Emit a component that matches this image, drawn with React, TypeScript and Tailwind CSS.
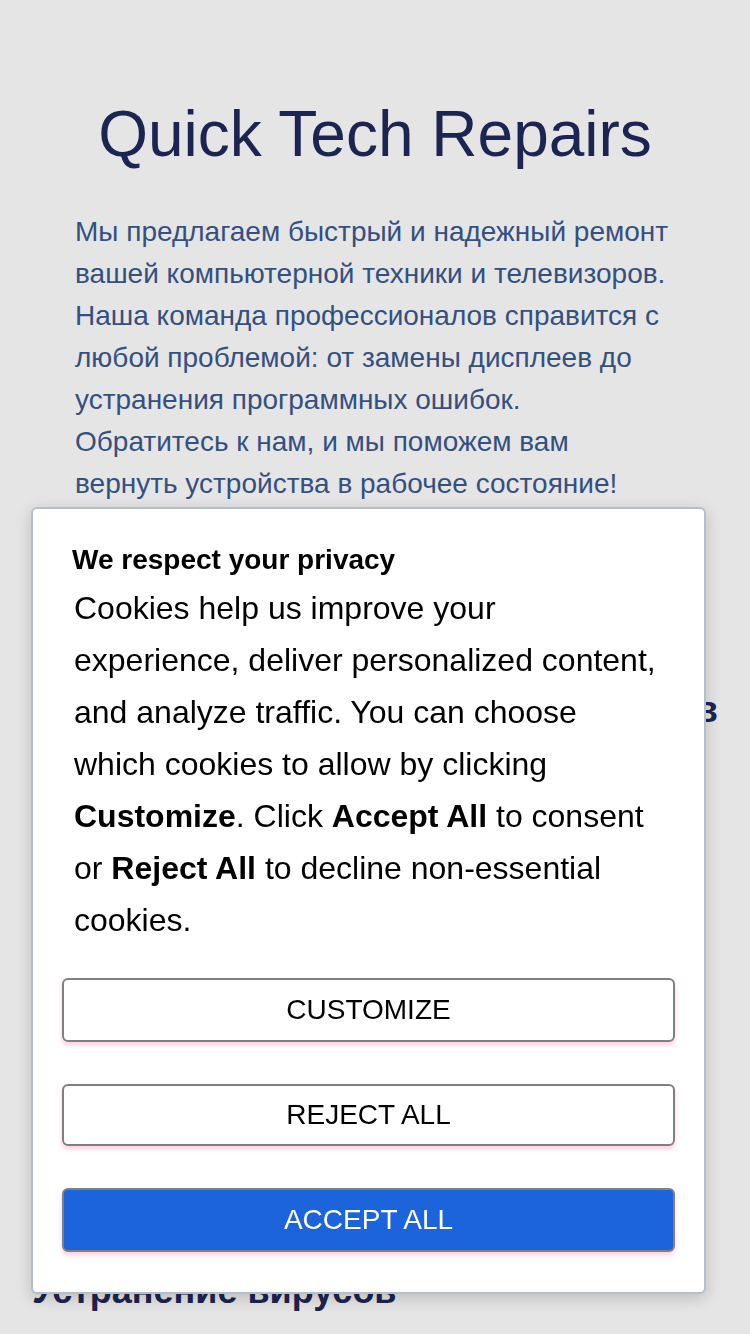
const App = () => {
  return (
    <div className="min-h-[1334px] bg-[#e5e5e5] font-['Liberation_Sans',Arial,sans-serif]">
      {/* Hero */}
      <section className="px-[75px] pt-[96px]">
        <h1 className="text-center text-[64px] leading-[1.2] text-[#1c2451]">Quick Tech Repairs</h1>
        <p className="mt-[38px] text-[28px] leading-[42px] text-[#34507f]">
          Мы предлагаем быстрый и надежный ремонт вашей компьютерной техники и телевизоров. Наша команда
          профессионалов справится с любой проблемой: от замены дисплеев до устранения программных ошибок.
          Обратитесь к нам, и мы поможем вам вернуть устройства в рабочее состояние!
        </p>
      </section>

      {/* Services */}
      <section className="px-[32px] pt-[185px]">
        <h2 className="text-right text-[36px] font-bold leading-[40px] text-[#1c2451] whitespace-nowrap">
          Ремонт ноутбуков
        </h2>
        <p className="mt-4 h-[126px] text-[28px] leading-[42px] text-[#34507f]">
          Диагностика и ремонт любой сложности: замена экранов, клавиатур и аккумуляторов.
        </p>
        <h2 className="mt-[64px] text-[36px] font-bold leading-[40px] text-[#1c2451]">Ремонт телевизоров</h2>
        <p className="mt-4 h-[84px] text-[28px] leading-[42px] text-[#34507f]">
          Восстановим подсветку, блоки питания и матрицы телевизоров.
        </p>
        <h2 className="mt-[195px] text-[36px] font-bold leading-[40px] text-[#1c2451]">Устранение вирусов</h2>
      </section>

      {/* Cookie banner */}
      <div className="fixed left-[31px] top-[507px] w-[675px] rounded-[6px] border-2 border-[#b3bfcc] bg-white pt-[29px] pb-[40px] shadow-[0_4px_16px_rgba(0,0,0,0.18)]">
        <div className="px-[39px]">
          <h3 className="text-[28px] font-bold leading-[44px] text-black">We respect your privacy</h3>
          <p className="pl-[2px] text-[32px] leading-[52px] text-black">
            Cookies help us improve your experience, deliver personalized content, and analyze traffic. You can choose
            which cookies to allow by clicking <b>Customize</b>. Click <b>Accept All</b> to consent or{' '}
            <b>Reject All</b> to decline non-essential cookies.
          </p>
        </div>
        <div className="mt-[32px] flex flex-col gap-[42px] px-[29px]">
          <button className="h-[64px] w-full rounded-[6px] border-2 border-[#808080] bg-white text-[28px] text-black shadow-[0_3px_5px_rgba(255,60,120,0.25)]">
            CUSTOMIZE
          </button>
          <button className="h-[62px] w-full rounded-[6px] border-2 border-[#808080] bg-white text-[28px] text-black shadow-[0_3px_5px_rgba(255,60,120,0.25)]">
            REJECT ALL
          </button>
          <button className="h-[64px] w-full rounded-[6px] border-2 border-[#808080] bg-[#1b64dc] text-[28px] text-white shadow-[0_3px_5px_rgba(255,60,120,0.25)]">
            ACCEPT ALL
          </button>
        </div>
      </div>
    </div>
  )
}

export default App
